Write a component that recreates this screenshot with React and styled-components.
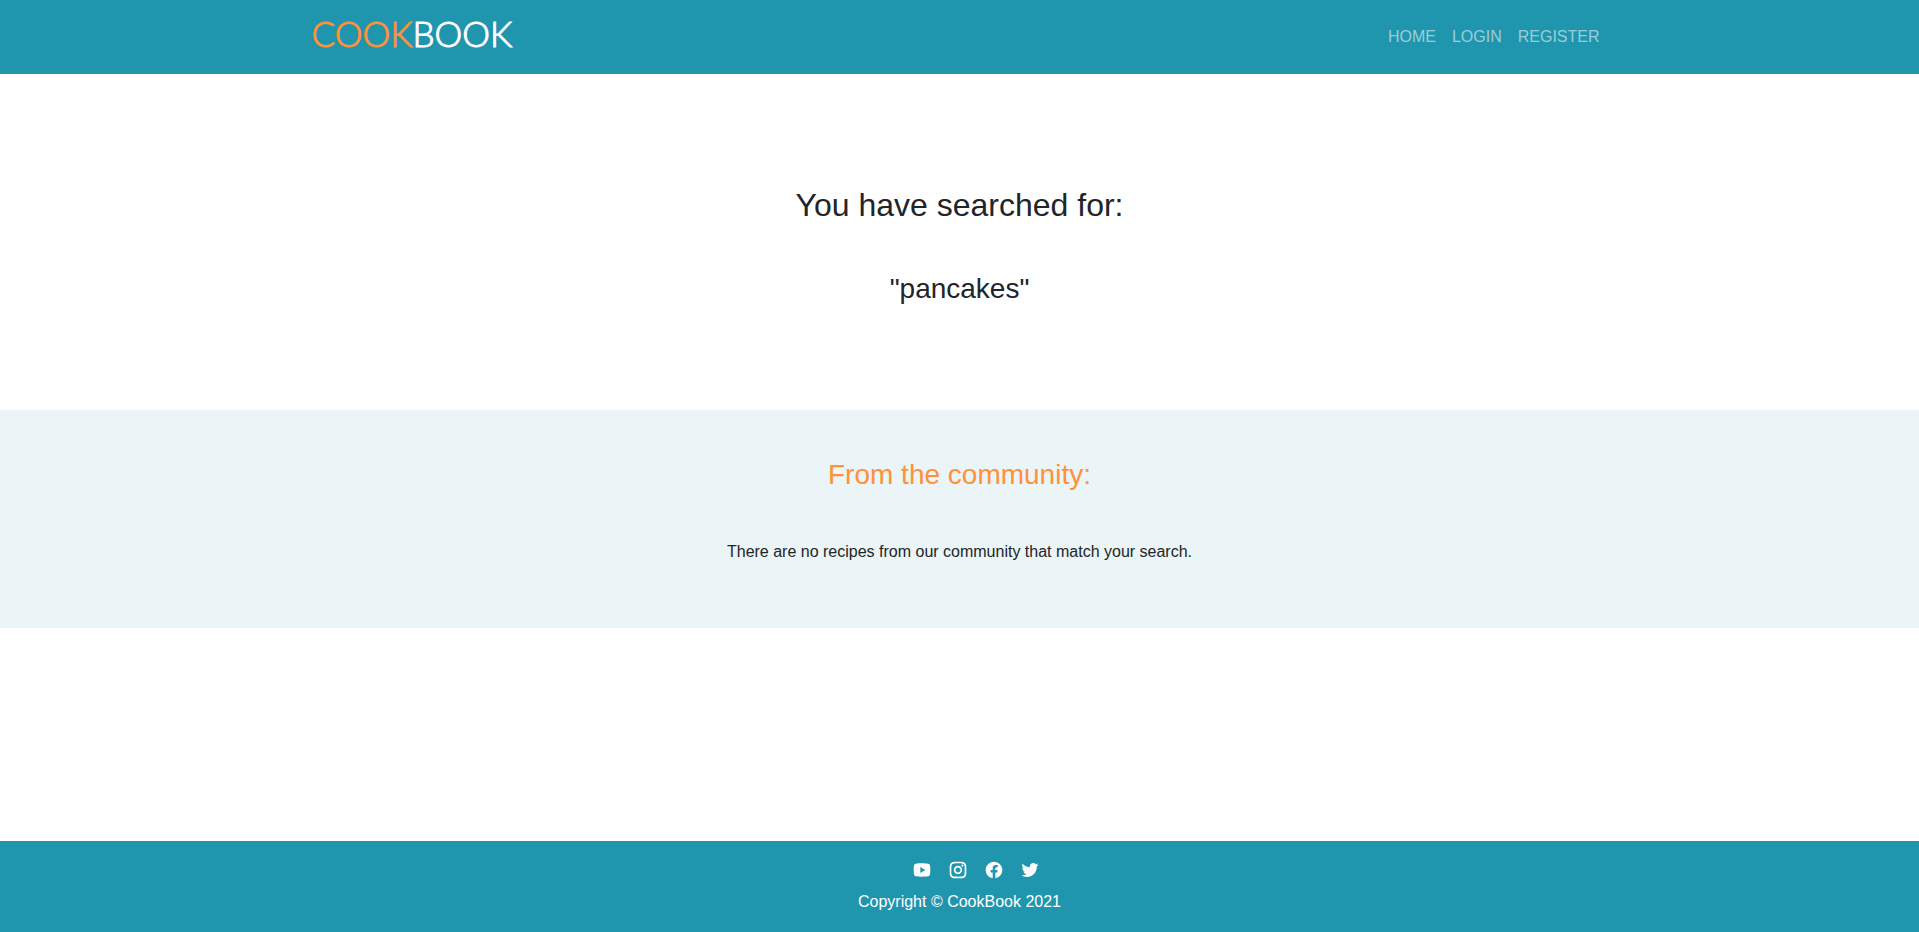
import React from "react";
import styled, { createGlobalStyle } from "styled-components";
import {
  RiYoutubeFill,
  RiInstagramLine,
  RiFacebookCircleFill,
  RiTwitterFill,
} from "react-icons/ri";

const GlobalStyle = createGlobalStyle`
  *, *::before, *::after { box-sizing: border-box; }
  body {
    margin: 0;
    background: #ffffff;
    color: #212529;
    font-family: "Liberation Sans", Arial, sans-serif;
    font-size: 16px;
    line-height: 24px;
  }
`;

const Page = styled.div`
  display: flex;
  flex-direction: column;
  min-height: 100vh;
`;

const Header = styled.header`
  background: #1f95ae;
`;

const Navbar = styled.div`
  display: flex;
  align-items: center;
  justify-content: space-between;
  max-width: 1320px;
  margin: 0 auto;
  padding: 9px 12px;
`;

const Brand = styled.a`
  padding-bottom: 8px;
  color: #ffffff;
  font-family: Lato, sans-serif;
  font-size: 35px;
  font-weight: 300;
  line-height: 48px;
  text-decoration: none;
  -webkit-text-stroke: 1px currentColor;
`;

const BrandAccent = styled.span`
  color: #ff9138;
`;

const Nav = styled.nav`
  display: flex;
`;

const NavLink = styled.a`
  padding: 8px;
  color: rgba(255, 255, 255, 0.55);
  text-decoration: none;
`;

const Main = styled.main`
  flex: 1;
  text-align: center;
`;

const SearchSummary = styled.section`
  padding: 112px 12px 104px;
`;

const Title = styled.h1`
  margin: 0 0 48px;
  font-size: 32px;
  font-weight: 400;
  line-height: 38px;
`;

const SearchTerm = styled.p`
  margin: 0;
  font-size: 28px;
  line-height: 34px;
`;

const Community = styled.section`
  padding: 48px 12px 64px;
  background: #ebf4f6;
`;

const SectionTitle = styled.h2`
  margin: 0 0 48px;
  color: #ff9138;
  font-size: 28px;
  font-weight: 400;
  line-height: 34px;
`;

const Message = styled.p`
  margin: 0;
`;

const Footer = styled.footer`
  padding: 19px 12px 18px;
  background: #1f95ae;
  color: #ffffff;
  text-align: center;
`;

const SocialList = styled.ul`
  display: flex;
  justify-content: center;
  gap: 16px;
  margin: 0 0 10px;
  padding: 0 0 0 32px;
  list-style: none;
`;

const SocialLink = styled.a`
  display: block;
  color: #ffffff;

  svg {
    display: block;
    width: 20px;
    height: 20px;
  }
`;

const Copyright = styled.p`
  margin: 0;
`;

const navItems = ["HOME", "LOGIN", "REGISTER"];

const socials = [
  { name: "YouTube", Icon: RiYoutubeFill },
  { name: "Instagram", Icon: RiInstagramLine },
  { name: "Facebook", Icon: RiFacebookCircleFill },
  { name: "Twitter", Icon: RiTwitterFill },
];

export default function App() {
  return (
    <Page>
      <GlobalStyle />
      <Header>
        <Navbar>
          <Brand href="#">
            <BrandAccent>COOK</BrandAccent>BOOK
          </Brand>
          <Nav>
            {navItems.map((item) => (
              <NavLink key={item} href="#">
                {item}
              </NavLink>
            ))}
          </Nav>
        </Navbar>
      </Header>
      <Main>
        <SearchSummary>
          <Title>You have searched for:</Title>
          <SearchTerm>"pancakes"</SearchTerm>
        </SearchSummary>
        <Community>
          <SectionTitle>From the community:</SectionTitle>
          <Message>There are no recipes from our community that match your search.</Message>
        </Community>
      </Main>
      <Footer>
        <SocialList>
          {socials.map(({ name, Icon }) => (
            <li key={name}>
              <SocialLink href="#" aria-label={name}>
                <Icon aria-hidden="true" />
              </SocialLink>
            </li>
          ))}
        </SocialList>
        <Copyright>Copyright © CookBook 2021</Copyright>
      </Footer>
    </Page>
  );
}
